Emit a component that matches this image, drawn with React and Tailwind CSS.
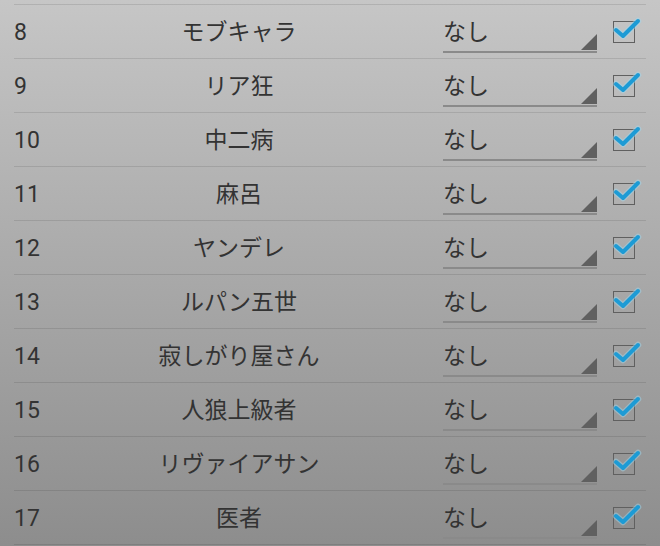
import React from "react";

const rows = [
  { no: 8, name: "モブキャラ" },
  { no: 9, name: "リア狂" },
  { no: 10, name: "中二病" },
  { no: 11, name: "麻呂" },
  { no: 12, name: "ヤンデレ" },
  { no: 13, name: "ルパン五世" },
  { no: 14, name: "寂しがり屋さん" },
  { no: 15, name: "人狼上級者" },
  { no: 16, name: "リヴァイアサン" },
  { no: 17, name: "医者" },
];

const Check = () => (
  <div className="relative w-[22px] h-[22px] border-[1.5px] border-[#606060] ml-[16px]">
    <svg
      className="absolute -left-[3px] -top-[8px]"
      width="32"
      height="30"
      viewBox="0 0 32 30"
    >
      <path
        d="M5 16 L12 22 L27 7"
        fill="none"
        stroke="#9edcf5"
        strokeOpacity="0.45"
        strokeWidth="6.5"
        strokeLinecap="round"
        strokeLinejoin="round"
      />
      <path
        d="M5 16 L12 22 L27 7"
        fill="none"
        stroke="#1d9bd5"
        strokeWidth="4"
        strokeLinecap="round"
        strokeLinejoin="round"
      />
    </svg>
  </div>
);

const Row = ({ no, name }) => (
  <div className="flex items-center h-[54px] border-t border-black/10">
    <div className="w-[60px] text-[23px] pt-[3px]">{no}</div>
    <div className="w-[330px] text-center text-[23px] pt-[3px]">{name}</div>
    {/* spinner */}
    <div className="relative ml-[39px] w-[154px] h-[37px] self-end mb-[5px] border-b-2 border-[#8a8a8a]">
      <div className="text-[23px] leading-[30px] pt-[2px]">なし</div>
      <div
        className="absolute right-0 bottom-[1px] w-[16px] h-[16px] bg-[#606060]"
        style={{ clipPath: "polygon(100% 0, 100% 100%, 0 100%)" }}
      />
    </div>
    <Check />
  </div>
);

export default function App() {
  return (
    <div
      className="w-[660px] h-[546px] overflow-hidden bg-linear-to-b from-[#c6c6c6] to-[#8d8d8d] text-[#333]"
      style={{ fontFamily: "Roboto, 'Noto Sans CJK JP', sans-serif" }}
    >
      <div className="mx-[14px] pt-[4px]">
        {rows.map((r) => (
          <Row key={r.no} {...r} />
        ))}
        <div className="border-t border-black/10" />
      </div>
    </div>
  );
}
